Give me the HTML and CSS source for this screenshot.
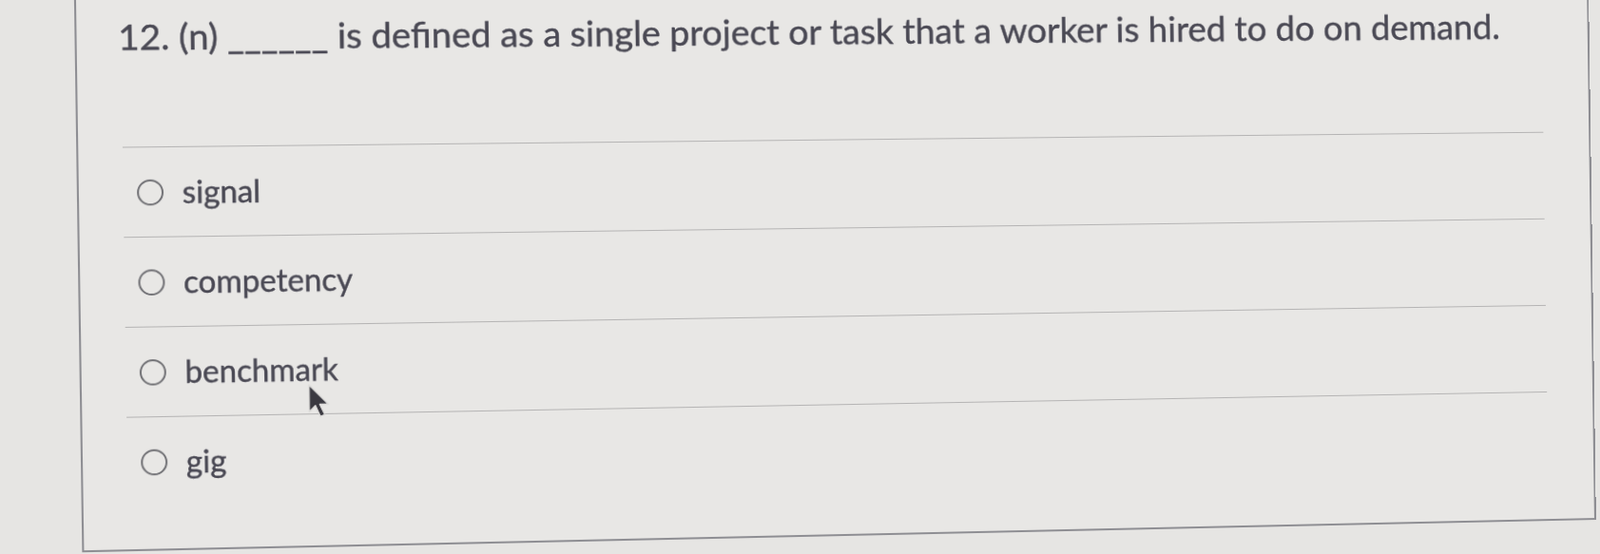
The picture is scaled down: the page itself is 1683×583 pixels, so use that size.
FILE: index.html
```html
<!DOCTYPE html>
<html lang="en">
<head>
<meta charset="utf-8">
<title>Question 12</title>
<link rel="stylesheet" href="styles.css">
</head>
<body>
<div class="screen">
  <div class="card">
    <div class="question">12. (n) ______ is defined as a single project or task that a worker is hired to do on demand.</div>
    <div class="options">
      <label class="option"><span class="radio"></span><span class="label">signal</span></label>
      <label class="option"><span class="radio"></span><span class="label">competency</span></label>
      <label class="option"><span class="radio"></span><span class="label">benchmark</span></label>
      <label class="option last"><span class="radio"></span><span class="label">gig</span></label>
    </div>
  </div>
  <svg class="cursor" width="28" height="38" viewBox="0 0 22 30">
    <path d="M2 1 L2 23 L7 18 L11 27 L14.5 25.5 L10.5 17 L17.5 17 Z" fill="#3a3940" stroke="#dcdbd9" stroke-width="1.1" stroke-linejoin="round"/>
  </svg>
</div>
</body>
</html>
```

FILE: styles.css
```css
html, body {
  margin: 0;
  padding: 0;
  width: 1683px;
  height: 583px;
  overflow: hidden;
  background: #e6e5e3;
}

.screen {
  position: relative;
  display: flow-root;
  width: 1683px;
  height: 583px;
  transform: perspective(2000px) rotateY(3deg) rotate(-0.82deg);
  transform-origin: 841px 291px;
  font-family: Lato, "Open Sans", "Liberation Sans", sans-serif;
  color: #4a4954;
}

.card {
  margin-left: 96px;
  margin-top: -17px;
  width: 1599px;
  height: 582px;
  border: 2px solid #8e8e93;
  border-top: none;
  box-sizing: border-box;
  background: #e8e7e5;
  display: flex;
  flex-direction: column;
}

.question {
  margin-top: 25px;
  padding-left: 42px;
  font-size: 37.45px;
  line-height: 50px;
  white-space: nowrap;
  -webkit-text-stroke: 0.4px #4a4954;
}

.options {
  margin: 89px 50px 0 45px;
  display: flex;
  flex-direction: column;
}

.option {
  display: flex;
  align-items: center;
  gap: 19px;
  padding: 29px 0 29px 14px;
  line-height: 34px;
  font-size: 32.2px;
  border-top: 1px solid #b5b4b4;
  -webkit-text-stroke: 0.4px #4a4954;
}

.radio {
  width: 27px;
  height: 27px;
  border: 2.5px solid #727276;
  border-radius: 50%;
  box-sizing: border-box;
  flex: none;
}

.cursor {
  position: absolute;
  left: 327px;
  top: 395px;
}
```
